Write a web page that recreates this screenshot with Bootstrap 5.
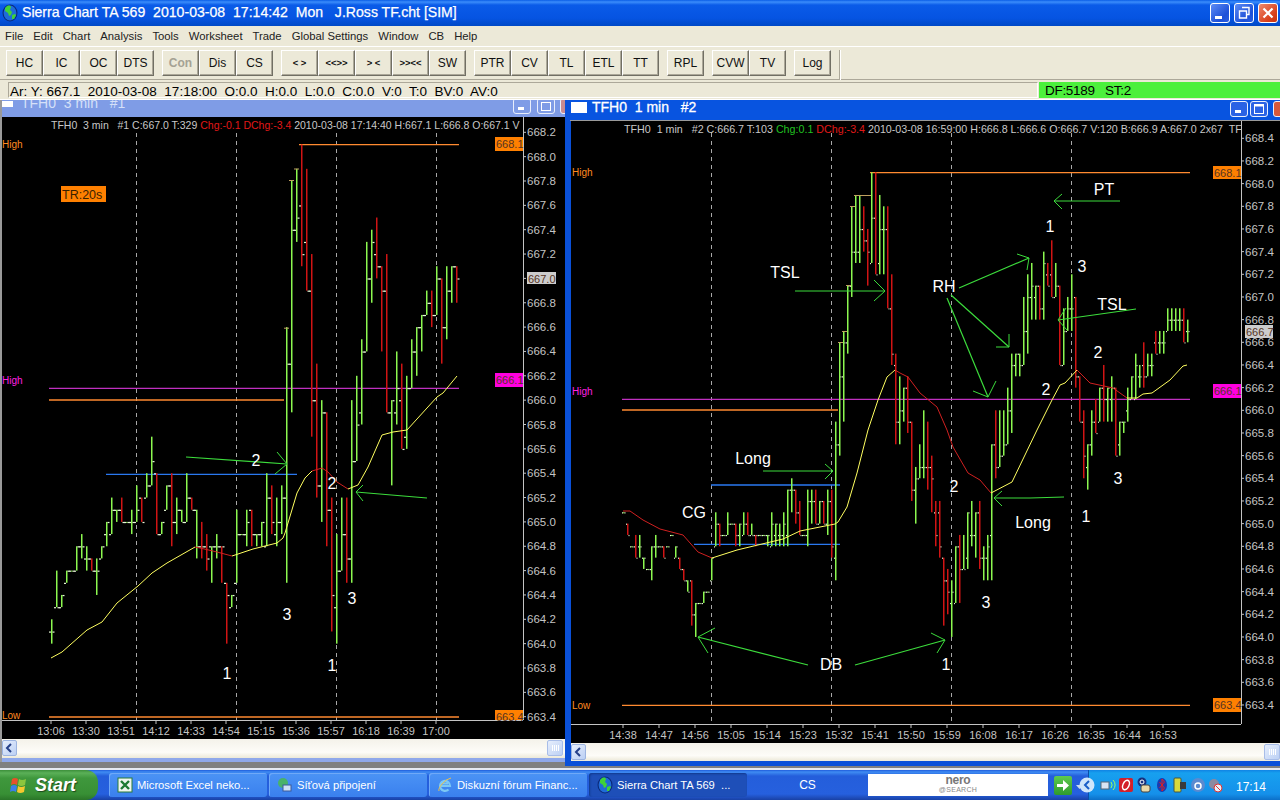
<!DOCTYPE html>
<html lang="cs">
<head>
<meta charset="UTF-8">
<title>Sierra Chart TA 569</title>
<link href="https://cdn.jsdelivr.net/npm/bootstrap@5.3.2/dist/css/bootstrap.min.css" rel="stylesheet">
<style>
html, body { width: 1280px; height: 800px; margin: 0; overflow: hidden; }
body { font-family: "Liberation Sans", Arial, sans-serif; background: #808080; color: #000; }
.app-title { height: 26px; flex: none; color: #fff; background: linear-gradient(#0a5ee6 0, #3b8dfb 2px, #0a5be8 5px, #0654e2 18px, #0049c6 26px); padding: 0 2px 0 2px; }
.app-title-text { font-size: 14.1px; white-space: pre; margin-left: 4px; -webkit-text-stroke: .25px #fff; }
.cap-btn { width: 20px; height: 20px; border: 1px solid #fff; border-radius: 3px; background: linear-gradient(135deg, #5e8df5, #1c4fd8 70%, #2a5ee0); padding: 0; display: block; }
.cap-btn svg { display: block; }
.cap-btn.closer { background: linear-gradient(135deg, #ee8a6e, #d9401c 70%, #c93410); }
.app-menu { height: 21px; flex: none; background: #ece9d8; border-bottom: 1px solid #fff; font-size: 11.3px; padding-left: 5px; gap: 10px; color: #222; }
.app-tools { height: 33px; flex: none; background: #ece9d8; border-bottom: 1px solid #aca899; padding: 3px 0 0 6px; gap: 8px; }
.tb-btn { width: 37px; height: 26px; padding: 0; font-size: 12px; line-height: 24px; color: #111; background: #ece9d8; border: 1px solid; border-color: #fff #716f64 #716f64 #fff; border-radius: 0 !important; box-shadow: inset -1px -1px 0 #aca899; margin: 0 !important; }
.tb-btn.dimmed { color: #a5a294; font-weight: 700; }
.tb-btn.small-txt { font-size: 9.5px; font-weight: 700; }
.tools-end { width: 1px; height: 30px; background: #aca899; box-shadow: 1px 0 0 #fff; }
.app-status { height: 20px; flex: none; background: #ece9d8; padding: 2px 0 1px 8px; font-size: 13.5px; line-height: 17px; white-space: pre; border-bottom: 1px solid #fff; }
.status-main { width: 1030px; border: 1px solid; border-color: #aca899 #fff #fff #aca899; padding-left: 1px; }
.status-feed { flex: 1; margin-left: 1px; background: #4cf03c; padding-left: 6px; letter-spacing: -.3px; }
.mdi-area { flex: 1; background: #808080; border-bottom: 2px solid #e6eaf2; }
.mdi-win { position: absolute; top: 0; }
#win1 { left: 0; width: 566px; height: 662px; background: #8fa8ea; border-left: 2px solid #9a9a9a; }
#win2 { left: 565px; width: 715px; height: 666px; background: #0a50d8; border-left: 5px solid #0a50d8; border-bottom: 5px solid #0a50d8; }
.win-cap { flex: none; overflow: hidden; white-space: pre; }
#win1 .win-cap { height: 17px; background: #7f9ce6; color: #d5e0f8; font-size: 14px; line-height: 6px; }
#win2 .win-cap { height: 21px; background: #0854e0; border-bottom: 1px solid #9a9a9a; color: #fff; font-size: 14px; line-height: 14px; -webkit-text-stroke: .3px #fff; }
.cap-ico { background: #fff; flex: none; }
#win1 .cap-ico { width: 11px; height: 6px; margin-top: 1px; }
#win2 .cap-ico { width: 16px; height: 11px; margin: 2px 5px 0 1px; }
.mini-btn { width: 18px; height: 16px; border: 1px solid #e8eefc; border-radius: 3px; background: #2a62e4; position: absolute; }
.mini-btn svg { display: block; }
.mini-btn.closer { background: #d9583a; }
#win1 .mini-btn { background: #7f9ce6; }
#win1 .mini-btn.closer { background: #c88a90; }
.chart-svg { display: block; flex: none; background: #000; }
#chart1 { width: 564px; height: 622px; }
#chart2 { width: 709px; height: 622px; margin-left: 1px; }
.h-scroll { flex: none; background: linear-gradient(#f4f2ea, #fdfcf8 70%, #ece9d8); position: relative; }
#win1 .h-scroll { height: 19px; }
#win2 .h-scroll { height: 18px; margin-left: 1px; }
.scroll-arrow { position: absolute; left: 0; top: 1px; width: 15px; height: 16px; background: linear-gradient(135deg, #e6eefc, #bcd0f4); border: 1px solid #9db4e0; border-radius: 2px; }
.scroll-arrow svg { display: block; }
.scroll-thumb { position: absolute; top: 1px; width: 16px; height: 16px; background: linear-gradient(135deg, #e6eefc, #bcd0f4); border: 1px solid #a8bde8; border-radius: 2px; }
.scroll-thumb svg { display: block; }
.app-taskbar { height: 30px; flex: none; background: linear-gradient(#1f5cdc, #3f8cf3 2px, #245edb 6px, #2660de 24px, #1941a5 30px); color: #fff; font-size: 11.2px; white-space: nowrap; }
.start-btn { width: 98px; height: 30px; border: 0; padding: 0 0 0 9px; color: #fff; font-size: 18px; font-style: italic; font-weight: 700; border-radius: 0 12px 12px 0; background: linear-gradient(#3c8f3a, #5bb058 3px, #3f983d 8px, #389035 24px, #2a7528); text-align: left; gap: 6px; text-shadow: 1px 1px 1px #1c4a1a; flex: none; }
.task-list { margin-left: 11px; gap: 2px; }
.task-btn { width: 158px; height: 24px; border-radius: 3px; background: linear-gradient(#4b93f5, #3a80ee); padding-left: 8px; gap: 4px; box-shadow: inset 1px 1px 0 #6fa9f8; }
.task-btn.is-active { background: #1e4fb8; box-shadow: inset 1px 1px 2px #123a8e; }
.task-lang { width: 121px; text-align: center; flex: none; font-size: 12px; }
.nero-box { width: 180px; height: 22px; background: #fff; flex: none; text-align: center; }
.nero-name { font-size: 12px; font-weight: 700; color: #777; display: block; line-height: 12px; letter-spacing: -.3px; }
.nero-sub { font-size: 7px; color: #888; display: block; line-height: 8px; letter-spacing: .3px; }
.go-btn { width: 18px; height: 19px; margin-left: 6px; background: linear-gradient(#5ecb4e, #2e9a2c); border-radius: 2px; flex: none; }
.tray-area { flex: 1; height: 30px; margin-left: 16px; background: linear-gradient(#1083e4, #17a0ef 3px, #1590ea 24px, #0c6fc8); box-shadow: inset 1px 0 0 #0a4fa8; position: relative; padding-left: 12px; gap: 2px; }
.tray-chev { position: absolute; left: -9px; top: 7px; }
.tray-clock { position: absolute; right: 14px; top: 8px; font-size: 12px; }
</style>
</head>
<body class="d-flex flex-column">

<svg width="0" height="0" class="position-absolute">
  <symbol id="globe" viewBox="0 0 16 18">
    <ellipse cx="8" cy="9" rx="7.5" ry="8.5" fill="#0b2a7a"/>
    <ellipse cx="8" cy="9" rx="6.4" ry="7.4" fill="#1f6bd8"/>
    <path d="M5 2c2-1 4 0 4 1l-1 3 2 2-1 3-2 1-1-3-3-2 0-3zM10 11l3-1 1 1-2 4-2 0z" fill="#3fd23a"/>
  </symbol>
</svg>

<header class="app-title d-flex align-items-center">
  <svg width="16" height="18"><use href="#globe"/></svg>
  <span class="app-title-text">Sierra Chart TA 569  2010-03-08  17:14:42  Mon   J.Ross TF.cht [SIM]</span>
  <div class="ms-auto d-flex gap-1">
    <button class="cap-btn"><svg width="18" height="18"><rect x="4" y="12" width="7" height="3" fill="#fff"/></svg></button>
    <button class="cap-btn"><svg width="18" height="18"><path d="M7 3.5h7v7h-2M4.5 7h7v7h-7z" fill="none" stroke="#fff" stroke-width="1.4"/></svg></button>
    <button class="cap-btn closer"><svg width="18" height="18"><path d="M4.5 4.5l9 9M13.5 4.5l-9 9" stroke="#fff" stroke-width="2.2"/></svg></button>
  </div>
</header>

<nav class="app-menu d-flex align-items-center">
  <span>File</span><span>Edit</span><span>Chart</span><span>Analysis</span><span>Tools</span><span>Worksheet</span><span>Trade</span><span>Global Settings</span><span>Window</span><span>CB</span><span>Help</span>
</nav>

<div class="app-tools d-flex">
  <div class="btn-group"><button class="btn tb-btn">HC</button><button class="btn tb-btn">IC</button><button class="btn tb-btn">OC</button><button class="btn tb-btn">DTS</button></div>
  <div class="btn-group"><button class="btn tb-btn dimmed">Con</button><button class="btn tb-btn">Dis</button><button class="btn tb-btn">CS</button></div>
  <div class="btn-group"><button class="btn tb-btn small-txt">&lt; &gt;</button><button class="btn tb-btn small-txt">&lt;&lt;&gt;&gt;</button><button class="btn tb-btn small-txt">&gt; &lt;</button><button class="btn tb-btn small-txt">&gt;&gt;&lt;&lt;</button><button class="btn tb-btn">SW</button></div>
  <div class="btn-group"><button class="btn tb-btn">PTR</button><button class="btn tb-btn">CV</button><button class="btn tb-btn">TL</button><button class="btn tb-btn">ETL</button><button class="btn tb-btn">TT</button></div>
  <button class="btn tb-btn">RPL</button>
  <div class="btn-group"><button class="btn tb-btn">CVW</button><button class="btn tb-btn">TV</button></div>
  <button class="btn tb-btn">Log</button>
  <div class="tools-end"></div>
</div>

<div class="app-status d-flex">
  <div class="status-main">Ar: Y: 667.1  2010-03-08  17:18:00  O:0.0  H:0.0  L:0.0  C:0.0  V:0  T:0  BV:0  AV:0</div>
  <div class="status-feed">DF:5189   ST:2</div>
</div>

<main class="mdi-area position-relative">
  <section id="win1" class="mdi-win d-flex flex-column">
    <div class="win-cap d-flex position-relative">
      <span class="cap-ico me-2"></span><span>TFH0  3 min   #1</span>
      <span class="mini-btn" style="left:511px;top:-2px"><svg width="16" height="14"><rect x="4" y="8" width="6" height="3" fill="#fff"/></svg></span>
      <span class="mini-btn" style="left:535px;top:-2px"><svg width="16" height="14"><rect x="3.500" y="3.500" width="9" height="8" fill="none" stroke="#fff"/></svg></span>
      <span class="mini-btn closer" style="left:558px;top:-2px"></span>
    </div>
    <svg id="chart1" class="chart-svg" viewBox="2 117 564 622"></svg>
    <div class="h-scroll">
      <span class="scroll-arrow"><svg width="13" height="14"><path d="M8 3L4 7l4 4" fill="none" stroke="#26408a" stroke-width="2"/></svg></span>
      <span class="scroll-thumb" style="left:545px"><svg width="14" height="14"><path d="M4.500 4v6M6.500 4v6M8.500 4v6M10.500 4v6" stroke="#fff"/></svg></span>
    </div>
  </section>

  <section id="win2" class="mdi-win d-flex flex-column">
    <div class="win-cap d-flex position-relative">
      <span class="cap-ico"></span><span>TFH0  1 min   #2</span>
      <span class="mini-btn" style="left:660px;top:1px"><svg width="16" height="14"><rect x="4" y="8" width="6" height="3" fill="#fff"/></svg></span>
      <span class="mini-btn" style="left:680px;top:1px"><svg width="16" height="14"><rect x="3.500" y="2.500" width="9" height="9" fill="none" stroke="#fff"/><path d="M3 3.500h10" stroke="#fff" stroke-width="2"/></svg></span>
      <span class="mini-btn closer" style="left:703px;top:1px"></span>
    </div>
    <svg id="chart2" class="chart-svg" viewBox="571 121 709 622"></svg>
    <div class="h-scroll">
      <span class="scroll-arrow"><svg width="13" height="14"><path d="M8 3L4 7l4 4" fill="none" stroke="#26408a" stroke-width="2"/></svg></span>
      <span class="scroll-thumb" style="left:693px"><svg width="14" height="14"><path d="M4.500 4v6M6.500 4v6M8.500 4v6M10.500 4v6" stroke="#fff"/></svg></span>
    </div>
  </section>
</main>

<footer class="app-taskbar d-flex align-items-center">
  <button class="start-btn d-flex align-items-center">
    <svg width="20" height="20" viewBox="0 0 20 20"><path d="M3 4q3-2 6 0l-1 6q-3-2-6 0z" fill="#e8502a"/><path d="M10 4q3 2 7 0l-1 6q-4 2-7 0z" fill="#8cc63e"/><path d="M2 11q3-2 6 0l-1 6q-3-2-6 0z" fill="#3c7ee8"/><path d="M9 11q3 2 7 0l-1 6q-4 2-7 0z" fill="#f6c82e"/></svg>
    <span>Start</span>
  </button>
  <div class="task-list d-flex">
    <div class="task-btn d-flex align-items-center">
      <svg width="16" height="16" viewBox="0 0 16 16"><rect x="1" y="1" width="14" height="14" fill="#eef6ee" stroke="#2a7a3a"/><path d="M4 4l8 8M12 4l-8 8" stroke="#1d7a33" stroke-width="2.4"/></svg>
      <span>Microsoft Excel neko...</span>
    </div>
    <div class="task-btn d-flex align-items-center">
      <svg width="16" height="16" viewBox="0 0 16 16"><circle cx="6" cy="6" r="5" fill="#49b26a"/><rect x="6" y="8" width="8" height="6" fill="#cfe0f5" stroke="#3a5a9a"/></svg>
      <span>Síťová připojení</span>
    </div>
    <div class="task-btn d-flex align-items-center">
      <svg width="16" height="16" viewBox="0 0 16 16"><path d="M3 9h10a5 5 0 1 0-1.5 3.5M5 6.5h6" fill="none" stroke="#7cc8f5" stroke-width="2.2"/><path d="M2 14q-1-2 3-7t9-6" fill="none" stroke="#e8c050"/></svg>
      <span>Diskuzní fórum Financ...</span>
    </div>
    <div class="task-btn is-active d-flex align-items-center">
      <svg width="16" height="18"><use href="#globe"/></svg>
      <span>Sierra Chart TA 569 &nbsp;...</span>
    </div>
  </div>
  <div class="task-lang">CS</div>
  <div class="nero-box"><span class="nero-name">nero</span><span class="nero-sub">@SEARCH</span></div>
  <div class="go-btn"><svg width="18" height="19" viewBox="0 0 18 19"><path d="M3 8h6V4l6 5.5-6 5.5v-4H3z" fill="#fff"/></svg></div>
  <svg class="position-absolute" style="left:1076px;top:785px" width="7" height="5"><path d="M0 0h7L3.500 4z" fill="#cde"/></svg>
  <div class="tray-area d-flex align-items-center">
    <svg class="tray-chev" width="16" height="16"><circle cx="8" cy="8" r="7.500" fill="#cfe6fb"/><path d="M10 4L6 8l4 4" fill="none" stroke="#1a5fc8" stroke-width="2"/></svg>
    <svg width="16" height="16"><rect x="1" y="5" width="8" height="7" fill="#d8e4f4" stroke="#567"/><path d="M11 5a5 5 0 0 1 0 6M13 3a7 7 0 0 1 0 10" fill="none" stroke="#9f6"/></svg>
    <svg width="16" height="16"><rect x="1" y="1" width="14" height="14" rx="2" fill="#d3202a"/><ellipse cx="8" cy="8" rx="3" ry="5" fill="none" stroke="#fff" stroke-width="1.500" transform="rotate(25 8 8)"/></svg>
    <svg width="16" height="16"><circle cx="6" cy="5" r="4.500" fill="#16307e"/><circle cx="6" cy="5" r="2" fill="none" stroke="#fff"/><rect x="5" y="8" width="9" height="7" rx="2" fill="#e8d8a8" stroke="#444"/></svg>
    <svg width="16" height="16"><ellipse cx="8" cy="8" rx="5" ry="7" fill="#1a3ab0"/><path d="M5.500 5l5 6-2.500 3V2l2.500 3-5 6" fill="none" stroke="#e02020"/></svg>
    <svg width="16" height="16"><rect x="2" y="1" width="7" height="14" rx="1" fill="#d8d83c" stroke="#454"/><rect x="8" y="5" width="6" height="7" fill="#3a3a3a"/></svg>
    <svg width="16" height="16"><circle cx="8" cy="8" r="7" fill="#5a8ad0"/><circle cx="8" cy="9" r="3" fill="none" stroke="#fff" stroke-width="1.500"/></svg>
    <svg width="16" height="16"><circle cx="6" cy="7" r="5" fill="#8a8aa0"/><circle cx="10" cy="11" r="4" fill="#e8f0f8" stroke="#d33"/><path d="M7.500 8.500l5 5" stroke="#d33"/></svg>
    <span class="tray-clock">17:14</span>
  </div>
</footer>

<script>
  // bars: colour, high, low, open, close - in tenths above 660.0
  const bars1 = `g42 40 41 41,g46 43 43 43,g44 43 43 44,g46 45 45 46,g46 46 46 46,g48 46 46 48,g49 47 48 48,g48 46 47 47,r47 46 47 46,g47 44 46 46,
g48 47 47 48,g50 48 49 50,g52 49 49 51,g51 50 51 51,r52 50 51 50,g50 50 50 50,g51 49 50 50,g53 50 50 51,r52 50 52 50,g54 52 52 53,
g57 53 53 55,r54 49 54 49,g50 49 49 50,g53 51 51 53,r54 48 53 50,g52 49 50 51,g51 50 51 50,g54 50 50 52,r52 51 52 51,g51 47 51 48,
r50 47 48 48,r49 46 48 47,g48 45 48 48,g49 47 48 48,r48 45 48 48,r45 40 45 44,g44 43 43 44,g51 45 45 49,g49 49 49 49,g51 48 49 50,
r51 48 51 49,g49 48 49 49,g50 48 49 50,g54 48 48 52,r53 49 52 50,g52 48 49 50,g53 49 50 52,g66 45 52 63,g78 59 63 74,g79 73 74 75,
r81 71 76 72,r79 69 73 69,r72 57 69 60,r63 52 60 53,g60 50 53 59,r59 48 59 51,r52 41 51 44,g49 40 43 46,g52 46 46 49,r52 45 49 47,
g60 45 47 55,g62 55 55 58,g65 58 59 64,g73 64 64 70,g74 68 70 73,r75 70 72 71,r71 64 71 69,r72 59 69 59,g60 53 59 60,g64 58 59 61,
r63 56 60 56,g62 56 57 61,g65 61 61 64,g66 62 64 66,g67 64 66 67,g69 67 67 68,r69 66 68 67,g71 67 67 70,r70 63 70 66,g71 65 66 69,
g71 68 69 71,r71 68 71 70`;

  const bars2 = `g51 51 51 51,r50 49 50 49,g48 48 48 48,r49 47 48 47,g49 47 48 48,g47 46 47 47,g46 46 46 46,g48 45 46 48,g49 47 48 48,g48 48 48 48,
r48 47 48 47,g48 48 48 48,g49 49 49 49,g48 47 47 48,r47 46 47 46,r46 45 46 45,g45 44 45 44,r45 41 45 42,g43 40 42 43,g43 43 43 43,
g44 43 43 44,g44 44 44 44,g47 45 45 47,g51 48 48 50,r50 48 50 49,g49 49 49 49,g51 49 49 50,g50 50 50 50,r50 48 50 49,g50 48 49 50,
g51 49 49 50,r51 49 50 49,g50 49 49 49,r49 48 49 49,g49 49 49 49,g49 49 49 49,g49 48 49 49,g51 48 48 50,g50 48 49 50,g50 48 49 49,
g51 48 49 50,g53 48 49 53,g54 51 53 53,r53 50 53 51,r52 49 51 49,g49 49 49 49,g53 48 49 52,g53 50 52 52,r53 50 52 50,g52 50 50 52,
r52 50 52 50,g53 49 50 52,r53 47 52 48,g59 45 47 57,g66 56 57 63,g67 59 63 66,g71 65 66 71,g78 70 71 74,g79 73 74 74,g79 73 74 76,
r78 74 76 75,r76 71 75 74,g81 73 73 77,r81 72 77 72,g79 72 73 76,g78 72 76 76,r78 69 76 69,r72 64 69 65,r65 57 64 59,g63 57 59 60,
g62 59 60 62,r63 58 62 59,r59 52 59 53,g55 50 53 54,g57 54 54 55,g60 54 55 55,r59 53 55 55,r56 51 55 54,r52 48 51 49,r52 47 51 48,
r47 41 47 45,r46 42 45 44,g45 40 43 44,g48 43 43 48,r49 43 48 46,g49 46 46 46,g51 46 47 51,g52 48 49 49,g51 47 49 51,r52 46 51 47,
g48 45 47 47,g49 45 47 48,g57 45 49 57,r60 54 57 55,g60 55 55 56,g60 56 56 57,g62 57 57 60,g65 58 60 64,g65 63 64 65,g65 63 65 64,
g70 64 64 67,g72 65 67 70,g73 68 70 71,g71 68 70 71,r71 68 71 69,g74 68 69 73,r73 71 72 71,r75 70 72 70,g73 70 70 71,r71 64 71 64,
g69 64 64 67,g70 67 67 69,g72 67 69 69,r70 62 70 63,r63 59 63 59,r60 54 59 56,g57 53 55 57,g60 56 57 59,r61 58 59 58,g62 59 59 62,
r64 59 62 61,g62 59 61 62,g63 59 61 62,r62 56 62 56,g59 56 57 59,g59 58 59 59,g62 59 60 61,g63 61 61 63,g65 61 61 64,g64 62 63 63,
r66 62 64 63,g65 63 63 64,g65 63 64 64,r67 65 66 65,g67 65 66 66,g67 65 66 66,g69 67 67 68,g69 67 68 68,g69 67 68 68,g69 67 68 68,
r69 66 68 66,g68 66 67 67`;

  const charts = {
    chart1: {
      data: bars1, x0: 51, step: 5, tickW: 2,
      y: v => 132.3 + (82 - v) * 12.175,
      axisX: 523, axisY: 720,
      ticks: ['668.2','668.0','667.8','667.6','667.4','667.2','667.0','666.8','666.6','666.4','666.2','666.0','665.8','665.6','665.4','665.2','665.0','664.8','664.6','664.4','664.2','664.0','663.8','663.6','663.4'],
      firstY: 132.3, stepY: 24.35,
      times: ['13:06','13:30','13:51','14:12','14:33','14:54','15:15','15:36','15:57','16:18','16:39','17:00'],
      timeX: 51, timeStep: 35, timeY: 735,
      dashes: [136.5, 236.5, 336.5, 436.5],
      title: 'TFH0  3 min   #1 C:667.0 T:329 <tspan fill="#e01818">Chg:-0.1 DChg:-3.4</tspan> 2010-03-08 17:14:40 H:667.1 L:666.8 O:667.1 V',
      titleX: 51, titleY: 129, titleSize: 10.5,
      lines: [['#ff8a30',299,459,144.7],['#c030c0',49,459,388.3],['#ff8a30',49,284,400],['#2a78f0',106,297,474.3],['#ff8a30',49,459,717]],
      curves: [
        ['#ffff60','51,658 62,652 87,630 102,622 117,603 138,586 152,573 167,563 195,547'],
        ['#d02020','195,547 200,548 217,552 232,556'],
        ['#ffff60','232,556 253,549 277,543 283,538 285,533 297,493 305,478 312,471'],
        ['#d02020','312,471 322,468 328,472 337,482 348,489'],
        ['#ffff60','348,489 358,485 368,467 382,435 393,432 407,430 437,397 443,393 457,376']
      ],
      arrows: ['186,457 287,464|277,452 287,464 275,474','427,498 356,492|363,485 356,492 363,501'],
      notes: [['2',256,466],['3',287,620],['1',227,679],['2',332,489],['3',352,604],['1',332,671]],
      tags: [['668.1','#ff8000',495,137,28,14],['666.1','#ff00e0',495,373,28,14],['663.4','#ff8000',495,710,28,10],['667.0','#cccccc',527,272,29,12]],
      labels: [['High','#ff8a20',2,148],['High','#ff20e0',2,384],['Low','#ff8a20',2,719]],
      caps: [[286,327.7],[291,180],[296,168.5]]
    },
    chart2: {
      data: bars2, x0: 623, step: 4, tickW: 1,
      y: v => 138.3 + (84 - v) * 11.333,
      axisX: 1241, axisY: 724,
      ticks: ['668.4','668.2','668.0','667.8','667.6','667.4','667.2','667.0','666.8','666.6','666.4','666.2','666.0','665.8','665.6','665.4','665.2','665.0','664.8','664.6','664.4','664.2','664.0','663.8','663.6','663.4'],
      firstY: 138.3, stepY: 22.667,
      times: ['14:38','14:47','14:56','15:05','15:14','15:23','15:32','15:41','15:50','15:59','16:08','16:17','16:26','16:35','16:44','16:53'],
      timeX: 623, timeStep: 36, timeY: 739,
      dashes: [711.5, 831.5, 951.5, 1071.5],
      title: 'TFH0  1 min   #2 C:666.7 T:103 <tspan fill="#20c020">Chg:0.1</tspan> <tspan fill="#e01818">DChg:-3.4</tspan> 2010-03-08 16:59:00 H:666.8 L:666.6 O:666.7 V:120 B:666.9 A:667.0 2x67  TFH0',
      titleX: 624, titleY: 133, titleSize: 10.7,
      lines: [['#ff8a30',870,1190,172.7],['#ff8a30',622,838,410],['#c030c0',622,1190,399.3],['#2a78f0',711,840,485],['#2a78f0',694,840,544.3],['#ff8a30',622,1190,705.3]],
      curves: [
        ['#d02020','623,511 630,511 643,520 660,529 683,535 698,552 712,558'],
        ['#ffff60','712,558 737,550 783,539 800,531 835,524 838,522 847,507 857,473 868,430 878,400 887,377 895,370'],
        ['#d02020','895,370 900,373 908,377 920,393 937,407 947,430 953,447 968,473 980,480 991,493'],
        ['#ffff60','991,493 1012,482 1037,430 1052,400 1060,385 1065,383 1077,370'],
        ['#d02020','1077,370 1090,383 1113,388 1127,398'],
        ['#ffff60','1127,398 1137,398 1143,394 1152,393 1170,380 1183,366 1187,365']
      ],
      arrows: [
        '1120,201 1054,201|1062,194 1054,201 1062,209',
        '959,288 1029,258|1017,254 1029,258 1027,270',
        '951,295 1009,347|1009,334 1009,347 996,347',
        '947,298 988,397|973,391 988,397 996,381',
        '1136,309 1058,320|1066,308 1058,320 1067,330',
        '795,291 885,291|874,280 885,291 874,301',
        '763,471 833,471|825,464 833,471 825,479',
        '808,665 698,637|715,628 698,637 708,653',
        '855,665 945,640|931,633 945,640 937,653',
        '1064,497 1030,498 994,498|1002,491 994,498 1002,506'
      ],
      notes: [['PT',1104,195],['1',1050,232],['3',1082,272],['TSL',785,278],['RH',944,292],['TSL',1112,310],['2',1098,358],['2',1046,395],['Long',753,464],['2',954,492],['CG',694,518],['1',1086,522],['Long',1033,528],['3',1118,484],['3',986,608],['DB',831,670],['1',946,670]],
      tags: [['668.1','#ff8000',1213,166,28,13],['666.1','#ff00e0',1213,384,28,14],['663.4','#ff8000',1213,698,28,14],['666.7','#cccccc',1245,325,28,13]],
      labels: [['High','#ff8a20',572,176],['High','#ff20e0',572,395],['Low','#ff8a20',572,709]],
      caps: [[840,342],[844,331],[848,285],[852,206],[856,195],[860,195],[864,195],[868,195]]
    }
  };

  function drawChart(id, c) {
    let out = '';
    // dashed separators sit behind the bars
    c.dashes.forEach(x => {
      out += `<line x1="${x}" x2="${x}" y1="133" y2="${c.axisY}" stroke="#a8a8a8" stroke-dasharray="4 4"/>`;
    });
    c.lines.forEach(l => {
      out += `<line x1="${l[1]}" x2="${l[2]}" y1="${l[3]}" y2="${l[3]}" stroke="${l[0]}" stroke-width="1.300"/>`;
    });
    c.data.split(',').forEach((b, i) => {
      b = b.trim();
      const colour = b[0] === 'r' ? '#d01414' : '#8cf850';
      const [h, l, o, cl] = b.slice(1).split(' ').map(Number);
      const x = Math.round(c.x0 + c.step * i);
      const yh = c.y(h), yl = c.y(l);
      out += `<rect x="${x}" y="${yh}" width="1.500" height="${Math.max(yl - yh, 1)}" fill="${colour}"/>`;
      out += `<rect x="${x - c.tickW}" y="${c.y(o)}" width="${c.tickW}" height="1.200" fill="#e8f8d8"/>`;
      out += `<rect x="${x + 1.500}" y="${c.y(cl)}" width="${c.tickW}" height="1.200" fill="#e8f8d8"/>`;
    });
    c.caps.forEach(k => {
      out += `<rect x="${k[0] - 2}" y="${k[1]}" width="5" height="1" fill="#c0a060"/>`;
    });
    c.curves.forEach(l => {
      out += `<polyline points="${l[1]}" fill="none" stroke="${l[0]}"/>`;
    });
    c.arrows.forEach(a => {
      const [shaft, head] = a.split('|');
      out += `<polyline points="${shaft}" fill="none" stroke="#3cdc3c" stroke-width="1.200"/><polyline points="${head}" fill="none" stroke="#3cdc3c"/>`;
    });

    // axes
    const ink = '#c4c4c4';
    out += `<line x1="${c.axisX + .5}" x2="${c.axisX + .5}" y1="117" y2="${c.axisY}" stroke="${ink}"/>`;
    out += `<line x1="2" x2="${c.axisX}" y1="${c.axisY + .5}" y2="${c.axisY + .5}" stroke="${ink}"/>`;
    c.ticks.forEach((t, i) => {
      const y = c.firstY + c.stepY * i;
      out += `<line x1="${c.axisX}" x2="${c.axisX + 3}" y1="${y}" y2="${y}" stroke="${ink}"/>`;
      out += `<text x="${c.axisX + 4}" y="${y + 4}" font-size="11.500" fill="${ink}">${t}</text>`;
    });
    c.times.forEach((t, i) => {
      const x = c.timeX + c.timeStep * i;
      out += `<line x1="${x}" x2="${x}" y1="${c.axisY}" y2="${c.axisY + 4}" stroke="${ink}"/>`;
      out += `<text x="${x}" y="${c.timeY}" font-size="11" fill="${ink}" text-anchor="middle">${t}</text>`;
    });

    // price tags on the axis
    c.tags.forEach(t => {
      out += `<rect x="${t[2]}" y="${t[3]}" width="${t[4]}" height="${t[5]}" fill="${t[1]}"/>`;
      out += `<text x="${t[2] + 1}" y="${t[3] + 10.500}" font-size="11" fill="#553322">${t[0]}</text>`;
    });
    c.labels.forEach(t => {
      out += `<text x="${t[2]}" y="${t[3]}" font-size="10" fill="${t[1]}">${t[0]}</text>`;
    });
    if (id === 'chart1') {
      out += `<rect x="61" y="186" width="45" height="16" fill="#ff8000"/><text x="62" y="199" font-size="12.500" fill="#3a2000">TR:20s</text>`;
    }
    c.notes.forEach(n => {
      out += `<text x="${n[1]}" y="${n[2]}" font-size="16" fill="#fff" text-anchor="middle">${n[0]}</text>`;
    });

    // header row is clipped by the price axis
    out += `<svg x="0" y="0" width="${c.axisX}" height="1000" viewBox="0 0 ${c.axisX} 1000"><text x="${c.titleX}" y="${c.titleY}" font-size="${c.titleSize}" fill="#c8c8c8" xml:space="preserve">${c.title}</text></svg>`;
    document.getElementById(id).innerHTML = out;
  }

  drawChart('chart1', charts.chart1);
  drawChart('chart2', charts.chart2);
</script>
<script src="https://cdn.jsdelivr.net/npm/bootstrap@5.3.2/dist/js/bootstrap.bundle.min.js"></script>
</body>
</html>
